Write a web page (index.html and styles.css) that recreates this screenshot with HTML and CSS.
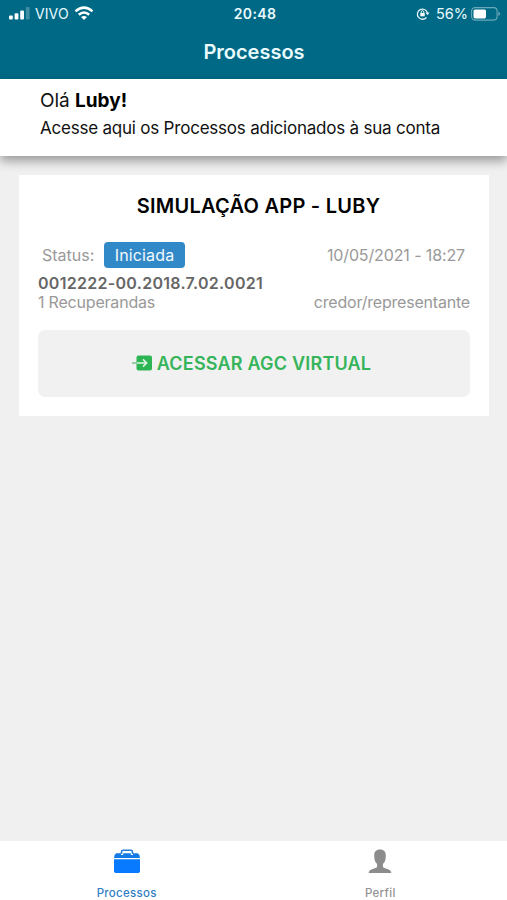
FILE: index.html
```html
<!DOCTYPE html>
<html lang="pt-BR">
<head>
<meta charset="utf-8">
<title>Processos</title>
<link rel="stylesheet" href="styles.css">
</head>
<body>
<div class="app">
  <header class="header">
    <div class="status-bar">
      <div class="carrier">
        <svg width="21" height="13" viewBox="0 0 21 13" fill="#fff"><rect x="0" y="8.5" width="3.8" height="4" rx="1"/><rect x="5.6" y="6.3" width="3.8" height="6.2" rx="1"/><rect x="11.2" y="3.5" width="3.8" height="9" rx="1"/><rect x="16.8" y="0" width="3.8" height="12.5" rx="1" opacity=".25"/></svg>
        <span class="carrier-name">VIVO</span>
        <svg class="wifi" width="20" height="15" viewBox="0 0 20 15" fill="none" stroke="#fff" stroke-width="2.5"><path d="M1.5 5.4Q10 -2.2 18.5 5.4"/><path d="M4.8 8.8Q10 4.2 15.2 8.8"/><path d="M7 11Q10 8.9 13 11L10 14Z" fill="#fff" stroke="none"/></svg>
      </div>
      <span class="clock">20:48</span>
      <div class="power">
        <svg width="14" height="13" viewBox="0 0 14 13" fill="none" stroke="#e4f4f8" stroke-width="1.3"><path d="M10.5 10.3A5.1 5.1 0 1 1 11.4 5.8"/><path d="M9.5 5.5h4l-2 2.7z" fill="#e4f4f8" stroke="none"/><rect x="4.3" y="6" width="4.4" height="3.3" fill="#fff" stroke="none"/><path d="M5.2 6V5a1.3 1.3 0 0 1 2.6 0v1" stroke-width="1"/></svg>
        <span class="percent">56%</span>
        <svg class="battery" width="30" height="14" viewBox="0 0 30 14"><rect x=".6" y=".6" width="25.5" height="12.5" rx="3.5" fill="none" stroke="#6aa9bb" stroke-width="1.1"/><rect x="2.5" y="2.4" width="12.5" height="9" rx="1.6" fill="#fff"/><path d="M27.4 4.5q3.5 2.3 0 4.6z" fill="#6aa9bb"/></svg>
      </div>
    </div>
    <h1 class="title"><span>Processos</span></h1>
  </header>
  <section class="greeting">
    <p class="hello">Olá <b>Luby!</b></p>
    <p class="intro"><span>Acesse aqui os Processos adicionados à sua conta</span></p>
  </section>
  <main class="content">
    <article class="card">
      <h2 class="card-title"><span>SIMULAÇÃO APP - LUBY</span></h2>
      <div class="row status-row">
        <div class="status"><span class="label">Status:</span><span class="badge">Iniciada</span></div>
        <span class="date">10/05/2021 - 18:27</span>
      </div>
      <div class="number"><span>0012222-00.2018.7.02.0021</span></div>
      <div class="row meta"><span class="count">1 Recuperandas</span><span class="role">credor/representante</span></div>
      <button class="enter">
        <svg width="20" height="16" viewBox="0 0 20 16"><rect x="4.5" y=".5" width="15.5" height="15" rx="2" fill="#2db553"/><path d="M0 8H5" stroke="#75c58b" stroke-width="1.5"/><path d="M5 8H14.5M11 4.4L14.7 8L11 11.6" fill="none" stroke="#e4f5e8" stroke-width="1.5"/></svg>
        <span>ACESSAR AGC VIRTUAL</span>
      </button>
    </article>
  </main>
  <nav class="tabs">
    <a class="tab active">
      <svg width="28" height="26" viewBox="0 0 28 26"><path d="M8.5 5V2.9Q8.5 1.3 10.1 1.3H17.9Q19.5 1.3 19.5 2.9V5" fill="none" stroke="#277ed8" stroke-width="1.6"/><path d="M3.2 4.2H8V6H10.2V4.2H17.8V6H20V4.2H24.8Q27 5.5 27 9H1Q1 5.5 3.2 4.2Z" fill="#147be6"/><path d="M1 10.3H27V22.3Q27 24 25.3 24H2.7Q1 24 1 22.3Z" fill="#087aff"/></svg>
      <span>Processos</span>
    </a>
    <a class="tab">
      <svg width="28" height="26" viewBox="0 0 28 26" fill="#8c8c8c"><path d="M14 .5C18 .5 20 2.9 19.8 6.8L19.5 10.2C19.2 12.5 18 13.9 16.9 14.9V18C18 19.8 24.8 19.4 25.4 24H2.6C3.2 19.4 10 19.8 11.1 18V14.9C10 13.9 8.8 12.5 8.5 10.2L8.2 6.8C8 2.9 10 .5 14 .5Z"/></svg>
      <span>Perfil</span>
    </a>
  </nav>
</div>
</body>
</html>
```
FILE: styles.css
```css
* { box-sizing: border-box; }
body { margin: 0; font-family: Inter, "Liberation Sans", sans-serif; color: #111; background: #f0f0f0; }
h1, h2, p { margin: 0; }
svg { display: block; flex: none; }
.app { height: 900px; display: flex; flex-direction: column; overflow: hidden; white-space: nowrap; }
.header { height: 79px; flex: none; background: #006985; color: #e9fbff; }
.status-bar { height: 27px; display: grid; grid-template-columns: 1fr auto 1fr; align-items: center; padding: 0 6px 0 9px; }
.carrier, .power { display: flex; align-items: center; }
.carrier-name { margin-left: 5px; width: 36px; font-size: 14px; letter-spacing: .1px; }
.wifi { margin-left: 3px; }
.clock { font-size: 14px; font-weight: 600; letter-spacing: .4px; }
.power { justify-content: flex-end; }
.percent { margin-left: 6px; font-size: 14.5px; }
.battery { margin-left: 3px; }
.title { height: 50px; display: flex; align-items: center; justify-content: center; padding-left: 1px; font-size: 20px; font-weight: 600; }
.greeting { position: relative; height: 77px; flex: none; padding: 10px 40px 0; background: #fff; box-shadow: 0 5px 10px rgba(0, 0, 0, .36); }
.hello { font-size: 19px; line-height: 24px; letter-spacing: -.02px; }
.hello b { color: #000; }
.intro { margin-top: 3px; font-size: 17px; line-height: 24px; letter-spacing: -.215px; }
.content { flex: 1; padding: 19px 18px 0 19px; }
.card { height: 241px; padding: 18px 19px 19px; background: #fff; }
.card-title { padding-left: 9px; font-size: 20px; line-height: 26px; font-weight: 600; letter-spacing: .25px; text-align: center; color: #000; }
.row { display: flex; justify-content: space-between; align-items: center; }
.status-row { margin-top: 23px; height: 26px; padding: 0 5px 0 4px; font-size: 16px; color: #999; }
.status { display: flex; align-items: center; }
.label { width: 62px; }
.badge { width: 81px; height: 26px; border-radius: 4px; background: #3289c7; color: #f2faff; line-height: 26px; text-align: center; letter-spacing: .15px; }
.date { letter-spacing: -.12px; }
.number { margin-top: 5px; font-size: 16px; font-weight: 600; line-height: 20px; letter-spacing: .29px; color: #666; }
.meta { height: 17px; font-size: 16px; letter-spacing: -.2px; color: #999; }
.enter { margin-top: 20px; width: 100%; height: 67px; display: flex; align-items: center; justify-content: center; gap: 5px; padding: 0 11px 0 6px; border: 0; border-radius: 7px; background: #f1f1f1; font: 600 18px Inter, sans-serif; letter-spacing: .2px; color: #35b45a; }
.enter svg { margin-bottom: 2px; }
.tabs { height: 59px; flex: none; display: grid; grid-template-columns: 1fr 1fr; background: #fff; }
.tab { display: flex; flex-direction: column; align-items: center; padding-top: 8px; gap: 10px; font-size: 11.5px; line-height: 16px; font-weight: 500; letter-spacing: .3px; color: #929292; }
.tab.active { color: #317fc5; }
```
